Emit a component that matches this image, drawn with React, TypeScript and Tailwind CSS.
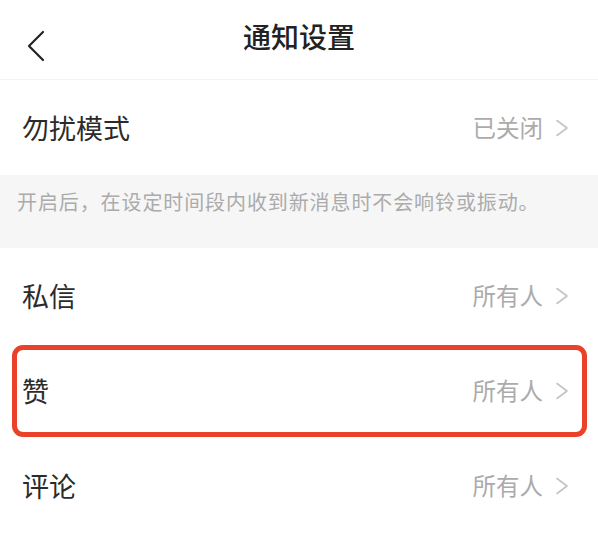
const font = { fontFamily: '"Noto Sans CJK SC", "Noto Sans", sans-serif' };

const Chevron = () => (
  <svg width="14" height="18" viewBox="0 0 14 18" fill="none" className="shrink-0">
    <path d="M2 1.5 L12 9 L2 16.5" stroke="#c4c4c4" strokeWidth="1.6" strokeLinecap="round" strokeLinejoin="round" />
  </svg>
);

interface RowProps {
  label: string;
  value: string;
  highlight?: boolean;
}

const Row = ({ label, value, highlight }: RowProps) => (
  <div className="relative flex h-[95px] items-center justify-between bg-white pl-[22px] pr-[29px]">
    <span className="text-[27px] leading-none text-[#2b2b2b]">{label}</span>
    <div className="flex items-center gap-[12px]">
      <span className="text-[23.5px] leading-none text-[#ababab]">{value}</span>
      <Chevron />
    </div>
    {highlight && (
      <div className="absolute top-[2px] bottom-[1px] left-[12px] right-[11px] rounded-[11px] border-[5px] border-[#e9412a]" />
    )}
  </div>
);

export default function App() {
  return (
    <div className="h-[552px] w-[598px] overflow-hidden bg-white" style={font}>
      <div className="relative flex h-[80px] items-center justify-center border-b border-[#f3f3f3]">
        <svg width="20" height="32" viewBox="0 0 20 32" fill="none" className="absolute left-[26px] top-[30px]">
          <path d="M17 2 L3 16 L17 30" stroke="#222" strokeWidth="2.2" strokeLinecap="round" strokeLinejoin="round" />
        </svg>
        <h1 className="-mt-[8px] text-[28px] font-medium leading-none text-[#222]">通知设置</h1>
      </div>

      <Row label="勿扰模式" value="已关闭" />

      <div className="flex h-[73px] items-start bg-[#f6f6f6] pl-[17px] pt-[17px]">
        <p className="text-[20px] leading-none tracking-[0.9px] text-[#ababab]">
          开启后，在设定时间段内收到新消息时不会响铃或振动。
        </p>
      </div>

      <Row label="私信" value="所有人" />
      <Row label="赞" value="所有人" highlight />
      <Row label="评论" value="所有人" />
    </div>
  );
}
